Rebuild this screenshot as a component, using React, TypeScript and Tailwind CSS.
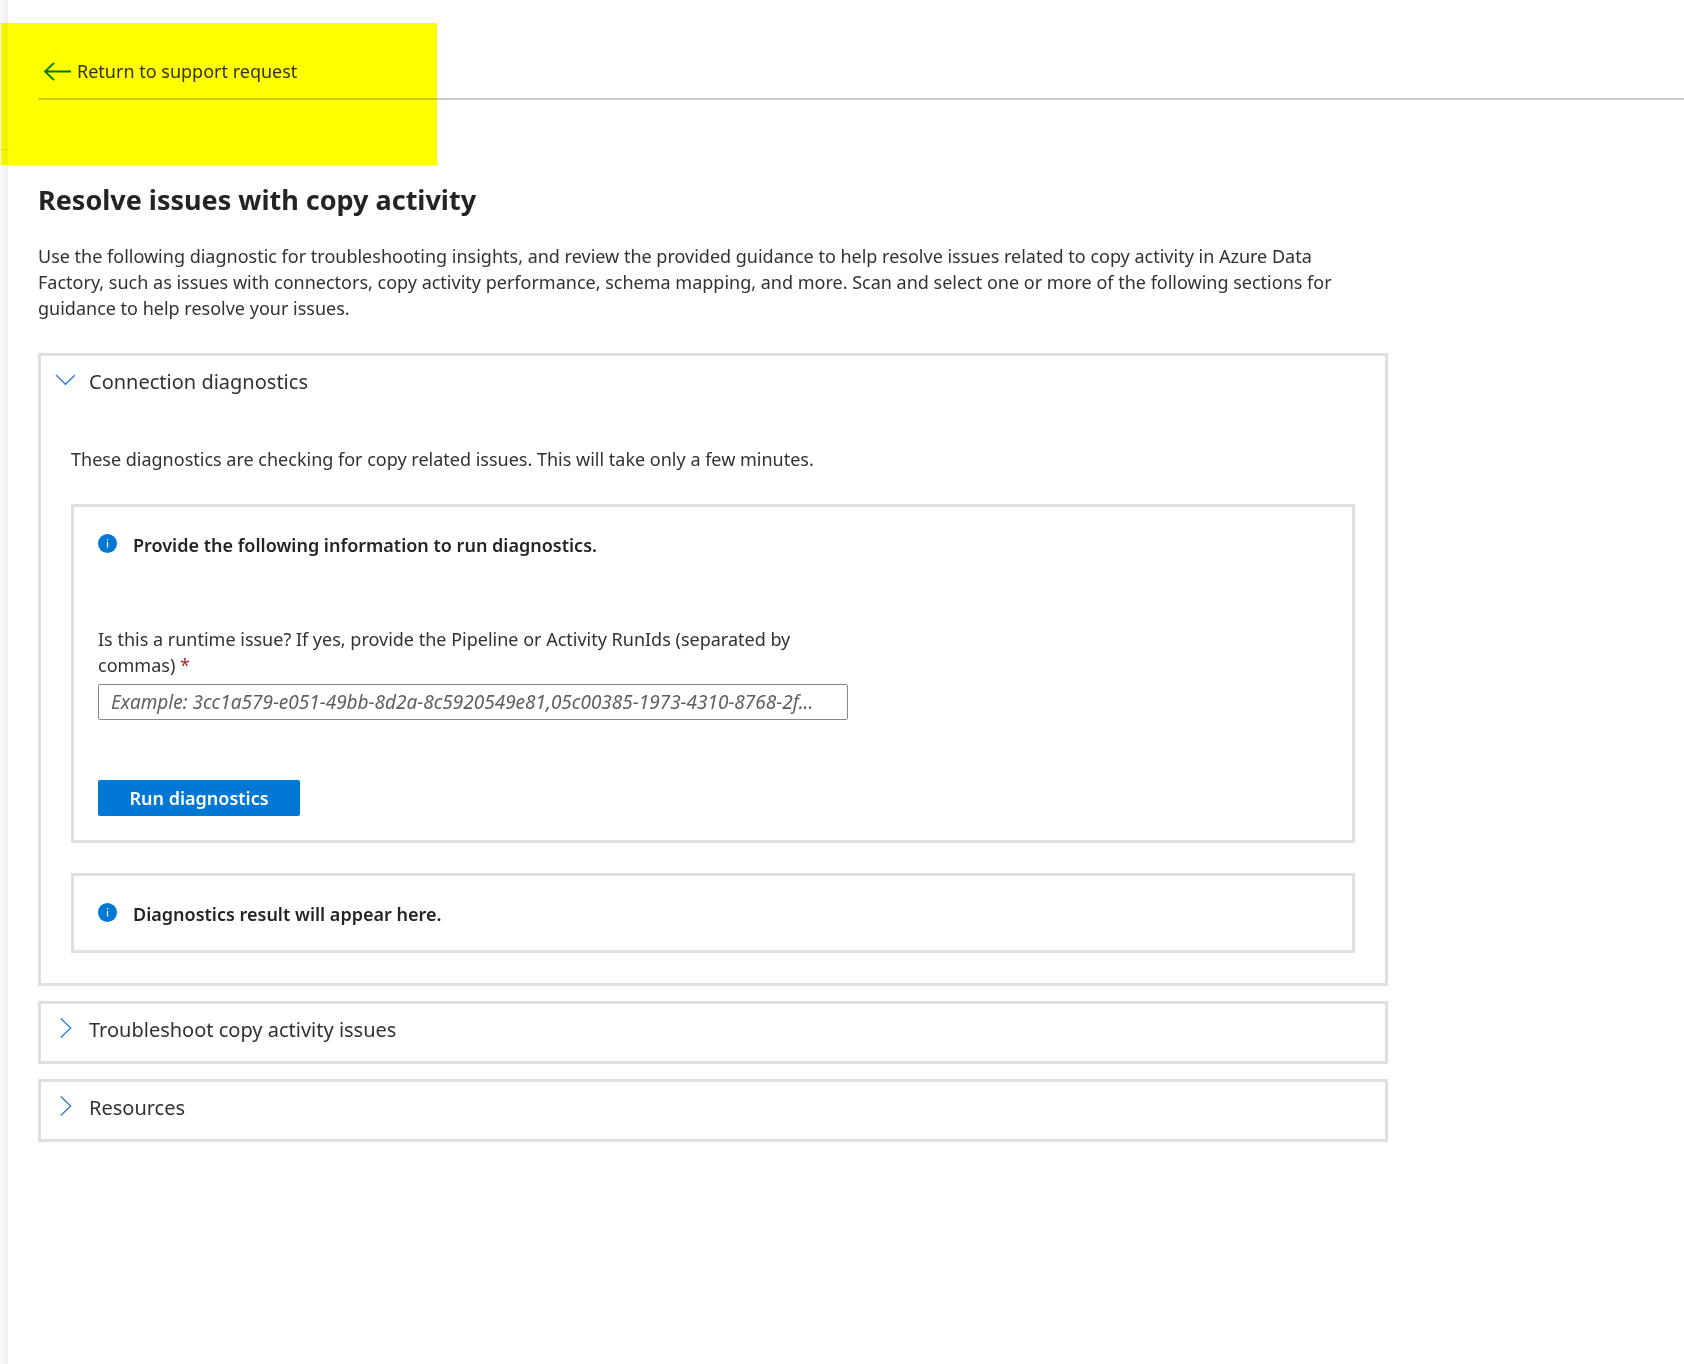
import { useState, type ReactNode } from "react";

const RUN_ID_HINT = "Example: 3cc1a579-e051-49bb-8d2a-8c5920549e81,05c00385-1973-4310-8768-2f...";

function BackArrow() {
  return (
    <svg width="28" height="20" viewBox="0 0 28 20" fill="none" stroke="#0078d4" strokeWidth="1.8" aria-hidden>
      <path d="M28 10.5H2M11 1.8L2 10.5L11 19.2" />
    </svg>
  );
}

function Chevron({ open }: { open: boolean }) {
  return (
    <svg width="20" height="20" viewBox="0 0 20 20" fill="none" stroke="#2b7cd3" strokeWidth="1.3" className="mb-1" aria-hidden>
      {open ? <path d="M1 5L10.5 14.3L20 5" /> : <path d="M5.7 0.5L15.7 10L5.7 19.5" />}
    </svg>
  );
}

function InfoIcon() {
  return (
    <svg width="19" height="19" viewBox="0 0 19 19" className="mb-1 shrink-0" aria-hidden>
      <circle cx="9.5" cy="9.5" r="9.5" fill="#0078d4" />
      <circle cx="9.5" cy="5.8" r="0.8" fill="#fff" />
      <path d="M9.5 7.8V13.6" stroke="#fff" strokeWidth="1.2" />
    </svg>
  );
}

function Section({ title, defaultOpen = false, children }: { title: string; defaultOpen?: boolean; children?: ReactNode }) {
  const [open, setOpen] = useState(defaultOpen);
  return (
    <section className="border-3 border-[#dfdfdf]">
      <button
        type="button"
        aria-expanded={open}
        onClick={() => setOpen(!open)}
        className="flex h-[57px] w-full items-center gap-3.5 px-3.5 pb-[5px] text-left text-[20px]"
      >
        <Chevron open={open} />
        {title}
      </button>
      {open && children}
    </section>
  );
}

function Notice({ text, children }: { text: string; children?: ReactNode }) {
  return (
    <div className="border-3 border-[#dfdfdf] px-6 pt-[25px] pb-[23px]">
      <div className="flex items-center gap-4 font-semibold text-[#242424]">
        <InfoIcon />
        {text}
      </div>
      {children}
    </div>
  );
}

export default function App() {
  const [runIds, setRunIds] = useState("");

  return (
    <div className="relative flex min-h-screen bg-white font-['Noto_Sans','Open_Sans',sans-serif] text-[18px] leading-[26px] text-[#323130]">
      {/* Edge of the blade underneath */}
      <div className="w-2 shrink-0 bg-linear-to-r from-[#fafafa] to-[#efefef]">
        <div className="mt-[149px] h-px bg-[#e0e0e0]" />
      </div>

      <main className="min-w-0 flex-1 pl-[30px]">
        <header className="border-b-2 border-[#cccccc] pt-14 pb-3">
          <a href="#support" className="ml-[5px] inline-flex h-[30px] items-center gap-1.5 align-top">
            <BackArrow />
            Return to support request
          </a>
        </header>

        <div className="max-w-[1350px] pt-20">
          <h1 className="text-[27px] leading-10 font-bold text-[#242424]">Resolve issues with copy activity</h1>
          <p className="mt-[23px] pr-10">
            Use the following diagnostic for troubleshooting insights, and review the provided guidance to help resolve
            issues related to copy activity in Azure Data Factory, such as issues with connectors, copy activity
            performance, schema mapping, and more. Scan and select one or more of the following sections for guidance to
            help resolve your issues.
          </p>

          <div className="mt-8 flex flex-col gap-[15px]">
            <Section title="Connection diagnostics" defaultOpen>
              <div className="px-[30px] pt-[33px] pb-[30px]">
                <p>These diagnostics are checking for copy related issues. This will take only a few minutes.</p>
                <div className="mt-8 flex flex-col gap-[30px]">
                  <Notice text="Provide the following information to run diagnostics.">
                    <form className="max-w-[750px] pt-[68px] pb-px" onSubmit={(e) => e.preventDefault()}>
                      <label htmlFor="run-ids" className="block">
                        Is this a runtime issue? If yes, provide the Pipeline or Activity RunIds (separated by commas){" "}
                        <span className="text-[#a4262c]">*</span>
                      </label>
                      <input
                        id="run-ids"
                        type="text"
                        required
                        value={runIds}
                        onChange={(e) => setRunIds(e.target.value)}
                        placeholder={RUN_ID_HINT}
                        className="mt-1.5 block h-9 w-full rounded-xs border border-[#8a8886] px-3 text-[19px] text-ellipsis placeholder:text-[#605e5c] placeholder:italic"
                      />
                      <button type="submit" className="mt-15 block h-9 w-[202px] rounded-xs bg-[#0078d4] font-semibold text-white">
                        Run diagnostics
                      </button>
                    </form>
                  </Notice>
                  <Notice text="Diagnostics result will appear here." />
                </div>
              </div>
            </Section>
            <Section title="Troubleshoot copy activity issues" />
            <Section title="Resources" />
          </div>
        </div>
      </main>

      {/* Highlighter over the return link */}
      <div className="pointer-events-none absolute top-[23px] left-px h-[142px] w-[436px] bg-[#ffff00] mix-blend-multiply" />
    </div>
  );
}
